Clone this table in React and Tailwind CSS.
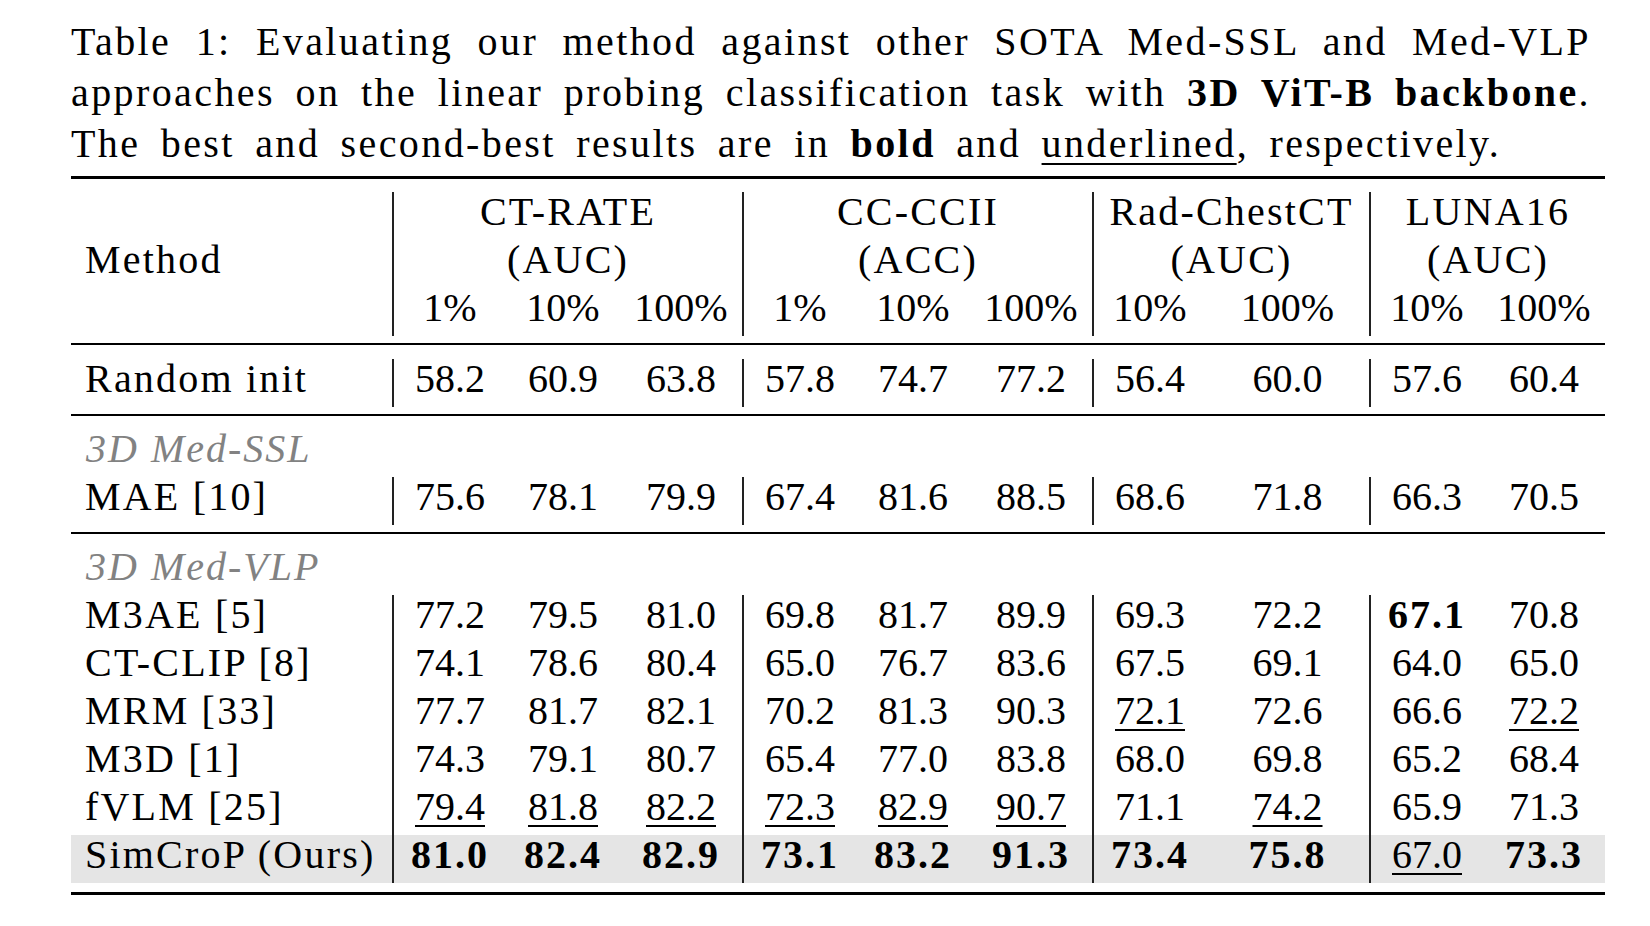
import React from "react";

const gridCols =
  "grid grid-cols-[321px_114px_114px_122px_114px_114px_122px_114px_163px_114px_122px]";

// columns that open a new dataset group get the vertical rule
const groupStarts = [1, 4, 7, 9];

const rows = [
  { name: "M3AE [5]", vals: ["77.2", "79.5", "81.0", "69.8", "81.7", "89.9", "69.3", "72.2", "67.1", "70.8"], bold: [8], under: [] },
  { name: "CT-CLIP [8]", vals: ["74.1", "78.6", "80.4", "65.0", "76.7", "83.6", "67.5", "69.1", "64.0", "65.0"], bold: [], under: [] },
  { name: "MRM [33]", vals: ["77.7", "81.7", "82.1", "70.2", "81.3", "90.3", "72.1", "72.6", "66.6", "72.2"], bold: [], under: [6, 9] },
  { name: "M3D [1]", vals: ["74.3", "79.1", "80.7", "65.4", "77.0", "83.8", "68.0", "69.8", "65.2", "68.4"], bold: [], under: [] },
  { name: "fVLM [25]", vals: ["79.4", "81.8", "82.2", "72.3", "82.9", "90.7", "71.1", "74.2", "65.9", "71.3"], bold: [], under: [0, 1, 2, 3, 4, 5, 7] },
];

const ours = {
  name: "SimCroP (Ours)",
  vals: ["81.0", "82.4", "82.9", "73.1", "83.2", "91.3", "73.4", "75.8", "67.0", "73.3"],
  bold: [0, 1, 2, 3, 4, 5, 6, 7, 9],
  under: [8],
};

const Num = ({ v, bold, under }) => {
  let cls = "";
  if (bold) cls += " font-bold tracking-[0.05em]";
  if (under) cls += " underline decoration-[2px] underline-offset-[5px]";
  return <span className={cls}>{v}</span>;
};

const DataRow = ({ row, shaded }) => (
  <div className={`${gridCols} h-[48px] leading-[40px] ${shaded ? "bg-[#e5e5e5]" : ""}`}>
    <div className="pl-[14px] tracking-[0.055em] whitespace-nowrap">{row.name}</div>
    {row.vals.map((v, i) => (
      <div
        key={i}
        className={`text-center ${groupStarts.includes(i + 1) ? "border-l-2 border-[#222]" : ""}`}
      >
        <Num v={v} bold={row.bold.includes(i)} under={row.under.includes(i)} />
      </div>
    ))}
  </div>
);

const LabelRow = ({ text }) => (
  <div className="h-[48px] leading-[40px] pl-[15px] italic text-[#828282] tracking-[0.05em]">{text}</div>
);

const Rule = ({ thick }) => (
  <div className={`w-full bg-black ${thick ? "h-[3px]" : "h-[2px]"}`} />
);

const groups = [
  { name: "CT-RATE", metric: "(AUC)", pos: "col-start-2 col-span-3", pcts: ["1%", "10%", "100%"] },
  { name: "CC-CCII", metric: "(ACC)", pos: "col-start-5 col-span-3", pcts: ["1%", "10%", "100%"] },
  { name: "Rad-ChestCT", metric: "(AUC)", pos: "col-start-8 col-span-2", pcts: ["10%", "100%"] },
  { name: "LUNA16", metric: "(AUC)", pos: "col-start-10 col-span-2", pcts: ["10%", "100%"] },
];

const pctCols = [
  "col-start-2", "col-start-3", "col-start-4", "col-start-5", "col-start-6",
  "col-start-7", "col-start-8", "col-start-9", "col-start-10", "col-start-11",
];

const Header = () => {
  let n = 0;
  return (
    <div className={`${gridCols} grid-rows-[48px_48px_48px] leading-[40px]`}>
      <div className="col-start-1 row-start-2 pl-[14px] tracking-[0.055em]">Method</div>
      {groups.map((g) => (
        <div key={g.name} className={`${g.pos} row-start-1 row-span-2 border-l-2 border-[#222] text-center tracking-[0.055em]`}>
          <div className="h-[48px]">{g.name}</div>
          <div className="h-[48px]">{g.metric}</div>
        </div>
      ))}
      {groups.map((g) =>
        g.pcts.map((p, j) => (
          <div
            key={g.name + p}
            className={`${pctCols[n++]} row-start-3 text-center ${j === 0 ? "border-l-2 border-[#222]" : ""}`}
          >
            {p}
          </div>
        ))
      )}
    </div>
  );
};

export default function App() {
  return (
    <div className="font-['Liberation_Serif']">
      <div className="w-[1650px] h-[926px] bg-white text-black text-[40px]">
        <div className="pl-[71px] pt-[16px] w-[1605px]">
          <div className="w-[1520px] leading-[51px] tracking-[0.06em] [word-spacing:8px]">
            <div className="text-justify [text-align-last:justify]">
              Table 1: Evaluating our method against other SOTA Med-SSL and Med-VLP
            </div>
            <div className="text-justify [text-align-last:justify]">
              approaches on the linear probing classification task with <b>3D ViT-B backbone</b>.
            </div>
            <div>
              The best and second-best results are in <b>bold</b> and{" "}
              <span className="underline decoration-[2px] underline-offset-[6px]">underlined</span>, respectively.
            </div>
          </div>

          <div className="w-[1534px] mt-[7px]">
            <Rule thick />
            <div className="h-[13px]" />
            <Header />
            <div className="h-[7px]" />
            <Rule />
            <div className="h-[14px]" />
            <DataRow row={{ name: "Random init", vals: ["58.2", "60.9", "63.8", "57.8", "74.7", "77.2", "56.4", "60.0", "57.6", "60.4"], bold: [], under: [] }} />
            <div className="h-[7px]" />
            <Rule />
            <div className="h-[13px]" />
            <LabelRow text="3D Med-SSL" />
            <DataRow row={{ name: "MAE [10]", vals: ["75.6", "78.1", "79.9", "67.4", "81.6", "88.5", "68.6", "71.8", "66.3", "70.5"], bold: [], under: [] }} />
            <div className="h-[7px]" />
            <Rule />
            <div className="h-[13px]" />
            <LabelRow text="3D Med-VLP" />
            {rows.map((r) => (
              <DataRow key={r.name} row={r} />
            ))}
            <DataRow row={ours} shaded />
            <div className="h-[9px]" />
            <Rule thick />
          </div>
        </div>
      </div>
    </div>
  );
}
